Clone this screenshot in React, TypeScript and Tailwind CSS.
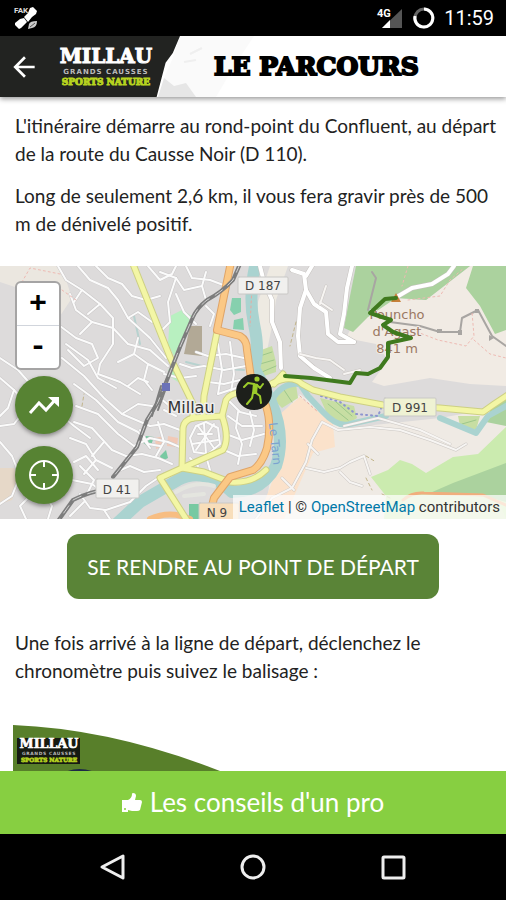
import React, { useState } from 'react';
import { MdArrowBack } from 'react-icons/md';

const streets = [
  'M58 0 66 14 82 24 100 38 113 52 113 78 100 98 98 108 120 116 140 128',
  'M78 0 90 14 108 22 118 34 128 52 150 72 166 92',
  'M96 0 108 12 122 18 132 30 146 34 160 30',
  'M70 28 76 44 92 56 113 62 128 78 150 84 168 100',
  'M82 24 74 36M100 38 88 48M92 56 80 68M128 52 138 46 152 56',
  'M60 60 76 72 92 78 98 92 84 100 68 84',
  'M62 92 84 110 104 132 122 148 150 160',
  'M66 78 88 94 98 112 116 122',
  'M74 118 96 134 118 156 138 166 150 182',
  'M76 140 98 148 118 168 134 180',
  'M74 156 92 162 112 184 126 190',
  'M70 172 86 178 96 194 112 202',
  'M80 200 94 214 88 226M96 194 84 208M104 176 92 190',
  'M0 92 18 104 34 122 50 140 74 160 90 172',
  'M0 112 14 124 8 142 0 150',
  'M14 124 28 140 14 158 0 160M0 176 12 190 20 210 12 230 0 238',
  'M22 210 40 222 52 240 48 253M32 228 20 240 26 253',
  'M74 196 86 190 98 204M60 222 72 214 92 218 100 224',
  'M80 228 90 242 106 244 130 236 146 220 164 208',
  'M70 250 84 236M104 244 110 253',
  'M116 206 130 200 144 206 160 204M126 190 142 188 158 192 172 198',
  'M134 180 150 172 168 176 182 182',
  'M118 96 134 88 148 98 164 106M134 88 138 72M148 98 144 114 152 124',
  'M128 120 138 112 148 116M122 148 138 138 152 140',
  'M176 28 184 46 196 58M160 6 176 12 184 24 202 20 206 6',
  'M148 0 160 14 172 8 176 0M186 0 192 12 210 14 226 20',
  'M176 12 168 36 170 56 160 66M202 20 206 34',
  'M206 40 214 48 210 60M180 98 192 102 204 100 224 104 246 100',
  'M196 86 208 90 226 88 244 92M218 78 222 104 218 128M230 76 234 108 230 132',
  'M218 128 236 122 246 128M208 116 224 118 240 114',
  'M228 134 240 146 256 150M228 150 242 160 262 160M226 168 242 174 264 168',
  'M224 184 238 190 256 188M238 146 236 162 242 178 238 198M250 146 254 164 250 180',
  'M196 160 206 156 218 162 220 178 208 188 194 186 190 172Z',
  'M198 168 212 168M204 158 206 188M192 178 218 174M198 160 214 182M214 158 196 184',
  'M150 160 164 158 180 164M164 144 176 150M158 156 164 176 156 190',
  'M140 164 148 178 160 180M160 132 172 142 184 142',
  'M190 192 198 200M206 190 210 204M164 108 180 112 196 110',
];

const countryRoads = [
  'M260 0 264 16 272 34 272 56 280 76 281 102',
  'M352 0 347 22 344 48 340 68 354 76',
  'M292 4 304 8 306 24 300 42 298 70 300 90 314 102 330 112',
  'M306 10 312 0M306 24 314 38 326 46 328 68 338 76 354 76',
  'M395 32 412 22 432 18 448 8 454 0',
];

const footPaths = [
  'M320 38 326 20M320 36 332 44',
  'M300 88 316 92 330 94 344 104M344 108 360 104',
  'M256 253 272 232 292 222 306 196 312 174 322 156 338 164 370 161 400 164 430 174 456 184 466 178',
  'M306 202 324 206 340 202 350 196 364 190 370 208',
  'M308 178 318 188M340 206 350 216 362 220M282 212 294 224',
  'M344 160 378 152 420 164 450 178',
];

const trailPoints =
  '396,32 385,33 370,47 391,54 383,59 393,66 411,72 388,77 388,91 380,102 368,108 356,107 350,117 311,112 285,110';

const railway =
  'M240 -2 233 14Q222 26 207 34 197 42 193 51L180 81 167 114 158 136 147 154 137 181 113 211M112 222Q88 226 73 234L58 255';

const mainRoads = 'M231 -4 217 64 240 70Q247 74 247 84L251 112 266 140Q272 158 267 182 262 198 253 204L230 211 214 232 208 256';

const yellowRoads = [
  'M133 -2 170 91 193 138 193 152',
  'M217 66 204 130 203 151',
  'M193 152Q184 154 183 162L182 202 160 212 188 256',
  'M193 152 222 150Q230 172 223 184L182 202 204 206 230 216Q252 218 266 204',
  'M222 150 226 134Q232 124 254 128',
  'M254 128 273 117Q292 108 302 118L313 124 340 131 383 139 440 142 483 146Q494 138 508 129',
  'M283 108 274 118',
];

const MapDrawing = () => (
  <svg
    className="block h-full w-full"
    viewBox="0 0 506 253"
    preserveAspectRatio="xMidYMid slice"
    role="img"
    aria-label="Carte du parcours"
    fill="none"
    strokeLinejoin="round"
    strokeLinecap="round"
  >
    <rect width="506" height="253" fill="#dddbdb" />
    {/* open ground */}
    <path d="M0 0H58L66 14 72 32 60 50 0 46Z" fill="#ebe7e0" />
    <path d="M0 16 18 22 16 60 0 52Z" fill="#dddbdb" />
    <path d="M270 0H288L276 34 272 60 266 90 256 96 250 60Z" fill="#eeeae2" />
    <path d="M356 52 396 32 426 34 470 0H506V120L470 118 430 112 384 120 372 116 388 94 376 78 346 72Z" fill="#f1ebe4" />
    <path d="M280 150 300 128 346 162 440 152 506 140V253H264Z" fill="#efeae4" />
    <path d="M300 131 280 148 278 200 258 253H284L313 187 335 181 333 158 320 147Z" fill="#fbe2cb" />
    {/* woods and parks */}
    <path d="M356 0H470L426 34 396 32 368 51 353 66 344 62 350 30Z" fill="#abd29e" />
    <path d="M473 0H506V64L495 68 480 40 466 22Z" fill="#abd29e" />
    <path d="M371 211 388 204 400 194 412 198 426 207 453 191 478 188 506 161V253H384L386 230Z" fill="#cbebaf" />
    <path d="M506 197 453 217 430 227 484 230 506 236ZM492 140 506 132V160L486 156Z" fill="#abd29e" />
    <path d="M403 253V236L420 226 483 229 500 238 506 253Z" fill="#d6e8bb" />
    <path d="M170 50 182 44 192 50 186 66 174 90 168 78Z" fill="#b8f0c0" />
    <path d="M190 60H202V90L184 88Z" fill="#b2a996" />
    <path d="M168 104 174 98 178 116 172 112Z" fill="#b8f0c0" />
    <path d="M232 32H241V46L234 49 230 44ZM234 54 243 52 244 64 233 63Z" fill="#86d0ae" />
    <path d="M142 176 146 170 154 171 150 182ZM160 190 166 184 168 192 162 195ZM189 238H200V253H189Z" fill="#78c9a2" />
    <path d="M155 172 164 170 164 180 156 183ZM168 170 178 172 177 181 167 180Z" fill="#f1c9b7" />
    <path d="M256 86 272 80 276 96 276 106 258 112ZM278 122 296 118 298 132 282 142 274 134ZM320 132 354 140 357 152 344 160 328 150ZM458 150 480 150 476 164 460 160Z" fill="#c7dea3" />
    <path d="M260 90 272 86M260 98 274 94M262 106 276 100M284 124 292 136M328 138 348 154M336 136 352 150M462 158 476 154" stroke="#9dc78a" />
    <path d="M0 202H14L20 214 12 234 0 238Z" fill="#e6d8c8" />

    {/* Tarn river */}
    <path d="M256 -4Q248 30 254 58T254 102Q264 120 271 136 286 170 276 200 262 226 232 226 204 200 178 214L140 236 112 262" stroke="#aad3d0" strokeWidth="12" />
    <path d="M176 226Q196 214 214 220M184 230 204 228" stroke="#e4e5df" strokeWidth="4" />
    <path d="M272 134Q282 116 300 118L308 130 323 146Q338 162 350 158L386 150M440 152 476 167 488 150 506 140" stroke="#aad3d0" strokeWidth="6" />
    <path d="M134 50 140 78M186 96 210 102 244 104" stroke="#b7d2cf" strokeWidth="2" />
    <path d="M150 253Q170 244 190 253" stroke="#f7bd82" strokeWidth="6" />

    {streets.map((d) => (
      <path key={d} d={d} stroke="#cbc9c9" strokeWidth="3" />
    ))}
    {streets.map((d) => (
      <path key={d} d={d} stroke="#fbfbfb" strokeWidth="2" />
    ))}
    {countryRoads.map((d) => (
      <path key={d} d={d} stroke="#c4c0bd" strokeWidth="5" />
    ))}
    {countryRoads.map((d) => (
      <path key={d} d={d} stroke="#fff" strokeWidth="4" />
    ))}
    {footPaths.map((d) => (
      <path key={d} d={d} stroke="#cbc7c3" strokeWidth="3" />
    ))}
    {footPaths.map((d) => (
      <path key={d} d={d} stroke="#f7f5f3" strokeWidth="2" />
    ))}
    <path d="M372 6 376 12 368 44M390 56 420 60 440 66 460 66 462 52 478 44 492 70 506 80" stroke="#a8a5a2" strokeWidth="2" />
    <path d="M437 63H442V67H437ZM458 64H462V69H458ZM475 43H479V47H475ZM489 69 494 72 489 75Z" fill="#a8a5a2" />
    <path d="M412 64 438 74 466 80 474 70 472 46M474 74 490 88 506 92M408 34 440 30 450 14 464 2M408 0 402 20M60 8 30 2 22 16M62 24 76 34" stroke="#eebab3" strokeWidth="1" strokeDasharray="2 3" />
    <path d="M300 130 318 146M252 20 250 60" stroke="#e9aaa0" strokeDasharray="2 3" />
    <path d="M321 130 340 136 356 148 378 150 382 140" stroke="#8d94cf" strokeWidth="2" strokeDasharray="1 4" />
    <path d="M366 190 376 196M366 212 372 224M382 228 390 232M82 140 84 128M296 56 290 80" stroke="#c2b58b" strokeDasharray="3 3" />

    {yellowRoads.map((d) => (
      <path key={d} d={d} stroke="#cdd083" strokeWidth="7" />
    ))}
    {yellowRoads.map((d) => (
      <path key={d} d={d} stroke="#f3f6a5" strokeWidth="5" />
    ))}
    <path d={mainRoads} stroke="#dfa468" strokeWidth="8" />
    <path d={mainRoads} stroke="#fbc885" strokeWidth="6" />
    <path d="M403 234Q412 226 424 227L483 229 508 240" stroke="#f0ae7d" strokeWidth="3" />
    <path d={railway} stroke="#7d7d7d" strokeWidth="4" />
    <path d={railway} stroke="#d0d0d0" strokeWidth="1" strokeDasharray="9 7" />
    <path d="M161 120 152 150M166 122 158 144" stroke="#7d7d7d" strokeWidth="2" />
    <rect x="162" y="117" width="8" height="8" fill="#6b72b8" />

    <g fontFamily="'DejaVu Sans', sans-serif" textAnchor="middle">
      <g fill="#f1f0ee" stroke="#c9c8c6">
        <rect x="238" y="11" width="50" height="17" rx="1" />
        <rect x="96" y="213" width="43" height="19" rx="1" />
        <rect x="384" y="132" width="52" height="18" rx="1" fill="#eff2d3" />
        <rect x="199" y="237" width="40" height="20" rx="1" fill="#f8deba" />
      </g>
      <g fill="#444" fontSize="12">
        <text x="263" y="24">D 187</text>
        <text x="117" y="228">D 41</text>
        <text x="410" y="146">D 991</text>
        <text x="217" y="251">N 9</text>
      </g>
      <text x="191" y="147" fontSize="16" fill="#333" stroke="#eee" strokeWidth="3" paintOrder="stroke">
        Millau
      </text>
      <text fontSize="13" fill="#9b7863" stroke="#f1ebe4" strokeWidth="2" paintOrder="stroke">
        <tspan x="397" y="53">Pouncho</tspan>
        <tspan x="397" y="70">d'Agast</tspan>
        <tspan x="397" y="87">841 m</tspan>
      </text>
      <text transform="translate(271 178) rotate(84)" fontSize="12" fill="#7ba3d0">
        Le Tarn
      </text>
    </g>

    <path d="M396 27 401 36H391Z" fill="#c7803a" />
    <polyline points={trailPoints} stroke="#3f7a1e" strokeWidth="4" />

    {/* runner marker */}
    <circle cx="254" cy="126" r="18" fill="#1d1f1b" />
    <circle cx="257" cy="113" r="2.6" fill="#9ccb2b" />
    <path d="M253 117 258 118 257 128 252 128Z" fill="#9ccb2b" />
    <path d="M254 118 248 117 244 121M257 119 260 122 263 118M256 127 260 130 261 137M253 127 252 132 247 138" stroke="#9ccb2b" strokeWidth="2" />
  </svg>
);

const Logo = ({ small = false }: { small?: boolean }) => (
  <svg className={small ? 'h-7 w-16' : 'h-11 w-25'} viewBox="0 0 100 44" role="img" aria-label="Millau Grands Causses Sports Nature">
    <g textAnchor="middle" fontWeight="700">
      <text x="50" y="18" fontFamily="'DejaVu Serif', serif" fontSize="20" fill="#fff" stroke="#fff" strokeWidth="1">
        MILLAU
      </text>
      <text x="50" y="29" fontFamily="'DejaVu Sans', sans-serif" fontSize="7" fill="#bbb" letterSpacing="1">
        GRANDS CAUSSES
      </text>
      <text x="50" y="40" fontFamily="'DejaVu Serif', serif" fontSize="9" fill="#b7d31f" stroke="#b7d31f">
        SPORTS NATURE
      </text>
    </g>
  </svg>
);

const StatusBar = () => (
  <div className="flex h-9 shrink-0 items-center justify-between bg-black px-3 text-white">
    <svg className="h-7 w-7" viewBox="0 0 28 28" aria-hidden="true">
      <text x="2" y="9" fontFamily="Roboto, sans-serif" fontSize="8" fontWeight="700" fill="#ddd">
        FAK
      </text>
      <path d="M18 4 21 3 25 7 24 10 20 13 16 9ZM12 13 16 9 20 13 16 18ZM8 15 12 14 15 18 9 24 7 25 3 21 3 19Z" fill="#fff" />
      <path d="M17 20Q18 17 25 17 25 23 20 24L16 25Z" fill="#ccc" />
      <path d="M18 23 23 19" stroke="#555" />
    </svg>
    <div className="flex items-center">
      <svg className="h-7 w-7" viewBox="0 0 28 28" aria-hidden="true">
        <path d="M26 5V24H6Z" fill="#555" />
        <path d="M14 16V24H6Z" fill="#fff" />
        <text x="1" y="13" fontFamily="Roboto, sans-serif" fontSize="11" fontWeight="700" fill="#fff">
          4G
        </text>
      </svg>
      <svg className="ml-2 h-6 w-6" viewBox="0 0 24 24" fill="none" strokeWidth="3" aria-hidden="true">
        <circle cx="12" cy="12" r="9" stroke="#666" />
        <path d="M12 3A9 9 0 1 1 3 10" stroke="#fff" />
      </svg>
      <span className="ml-2 font-[Roboto,sans-serif] text-xl">11:59</span>
    </div>
  </div>
);

const Header = () => (
  <header className="relative z-10 flex h-[61px] shrink-0 items-center bg-white shadow-[0_2px_5px_rgba(0,0,0,0.4)]">
    <div className="flex h-full w-[180px] shrink-0 items-center bg-[#222321] pl-2 [clip-path:polygon(0_0,100%_0,96%_28%,92%_44%,87%_100%,0_100%)]">
      <button type="button" aria-label="Retour" className="text-white">
        <MdArrowBack className="h-8 w-8" />
      </button>
      <a href="#accueil" className="ml-4">
        <Logo />
      </a>
    </div>
    <svg className="-ml-6 h-full w-28 shrink-0" viewBox="0 0 112 61" aria-hidden="true">
      <path d="M24 0 16 24 8 42 4 61H60L78 30 98 0Z" fill="#fafafa" />
      <path d="M2 61 8 42 18 50 30 47 40 61Z" fill="#e6e6e6" />
      <path d="M34 18 46 12M28 26 40 24" stroke="#efefef" strokeWidth="2" />
    </svg>
    <h1 className="-ml-[54px] font-['DejaVu_Serif',serif] text-[25px] font-bold whitespace-nowrap text-black [-webkit-text-stroke:2px_black]">LE PARCOURS</h1>
  </header>
);

const RouteMap = () => {
  const [zoom, setZoom] = useState(14);
  const round = 'flex h-[58px] w-[58px] items-center justify-center rounded-full bg-[#578333] shadow-[0_2px_4px_rgba(0,0,0,0.4)]';

  return (
    <section className="relative h-[253px]" data-zoom={zoom}>
      <MapDrawing />
      <div className="absolute top-[15px] left-[15px] flex flex-col items-start">
        <div className="flex w-[46px] flex-col rounded-md border-2 border-[#a5a4a4] bg-white font-['Liberation_Mono',monospace] text-3xl font-bold text-black">
          <button type="button" aria-label="Zoom avant" onClick={() => setZoom(zoom + 1)} className="h-[43px] border-b border-gray-300 leading-10">
            +
          </button>
          <button type="button" aria-label="Zoom arrière" onClick={() => setZoom(zoom - 1)} className="h-[42px] leading-10">
            -
          </button>
        </div>
        <button type="button" aria-label="Profil altimétrique" className={`mt-1.5 ${round}`}>
          <svg className="h-8 w-8" viewBox="0 0 32 32" fill="none" aria-hidden="true">
            <path d="M2 24 11 14 18 21 27 11" stroke="#fff" strokeWidth="3" />
            <path d="M20 8H31V18Z" fill="#fff" />
          </svg>
        </button>
        <button type="button" aria-label="Ma position" className={`mt-3 ${round}`}>
          <svg className="h-8 w-8" viewBox="0 0 32 32" fill="none" stroke="#fff" strokeWidth="2" aria-hidden="true">
            <circle cx="16" cy="16" r="14" />
            <path d="M16 2V8M16 24V30M2 16H8M24 16H30" />
          </svg>
        </button>
      </div>
      <p className="absolute right-0 bottom-0 bg-white/70 px-1.5 font-[Roboto,sans-serif] text-[15px] leading-6 tracking-normal text-[#333] sm:text-base">
        <a href="#leaflet" className="text-[#0078a8]">Leaflet</a> | © <a href="#osm" className="text-[#0078a8]">OpenStreetMap</a> contributors
      </p>
    </section>
  );
};

const ThumbIcon = () => (
  <svg className="h-5 w-5" viewBox="0 0 20 20" aria-hidden="true">
    <path d="M0 7H6Q10 5 10 1 10 0 11 0 14 0 14 3L13 7H18Q20 7 20 9L18 17Q17 18 15 18H10L6 17V19H0Z" fill="#fff" />
    <circle cx="3" cy="16" r="1" fill="#87cf41" />
  </svg>
);

const NavBar = () => (
  <nav className="flex h-[66px] shrink-0 items-center justify-center gap-28 bg-black text-[#eee]">
    <button type="button" aria-label="Précédent">
      <svg className="h-7 w-7" viewBox="0 0 28 28" fill="none" stroke="currentColor" strokeWidth="3" strokeLinejoin="round">
        <path d="M24 3V25L3 14Z" />
      </svg>
    </button>
    <button type="button" aria-label="Accueil">
      <svg className="h-7 w-7" viewBox="0 0 28 28" fill="none" stroke="currentColor" strokeWidth="3">
        <circle cx="14" cy="14" r="11" />
      </svg>
    </button>
    <button type="button" aria-label="Applications récentes">
      <svg className="h-7 w-7" viewBox="0 0 28 28" fill="none" stroke="currentColor" strokeWidth="3">
        <rect x="4" y="4" width="21" height="21" rx="1" />
      </svg>
    </button>
  </nav>
);

const App = () => {
  return (
    <div className="flex h-screen flex-col bg-white font-[Lato,sans-serif] text-[#222]">
      <StatusBar />
      <Header />
      <main className="min-h-0 flex-1 overflow-y-auto [scrollbar-width:none]">
        <div className="flex flex-col gap-3.5 pt-[15px] pr-1 pb-7 pl-[15px] text-[19px] leading-7">
          <p>L'itinéraire démarre au rond-point du Confluent, au départ de la route du Causse Noir (D 110).</p>
          <p>Long de seulement 2,6 km, il vous fera gravir près de 500 m de dénivelé positif.</p>
        </div>
        <RouteMap />
        <div className="flex justify-center pt-[15px]">
          <button type="button" className="h-[65px] rounded-xl bg-[#5a8437] px-5 text-[21px] whitespace-nowrap text-white">
            SE RENDRE AU POINT DE DÉPART
          </button>
        </div>
        <p className="pt-[30px] pr-16 pl-[15px] text-[19px] leading-7">
          Une fois arrivé à la ligne de départ, déclenchez le chronomètre puis suivez le balisage :
        </p>
        <div className="relative mx-[13px] mt-10 h-48">
          <svg className="h-full w-full" viewBox="0 0 480 192" preserveAspectRatio="xMinYMin slice" aria-hidden="true">
            <path d="M0 0Q100 4 207 46 300 86 360 192H0Z" fill="#587f2a" />
            <rect x="4" y="13" width="63" height="26" fill="#161a12" />
            <path d="M50 48Q66 40 84 48Z" fill="#1d2947" />
          </svg>
          <div className="absolute top-3 left-1">
            <Logo small />
          </div>
        </div>
      </main>
      <button type="button" className="flex h-[63px] shrink-0 items-center justify-center gap-2 bg-[#87cf41] text-[26px] text-white">
        <ThumbIcon />
        Les conseils d'un pro
      </button>
      <NavBar />
    </div>
  );
};

export default App;
